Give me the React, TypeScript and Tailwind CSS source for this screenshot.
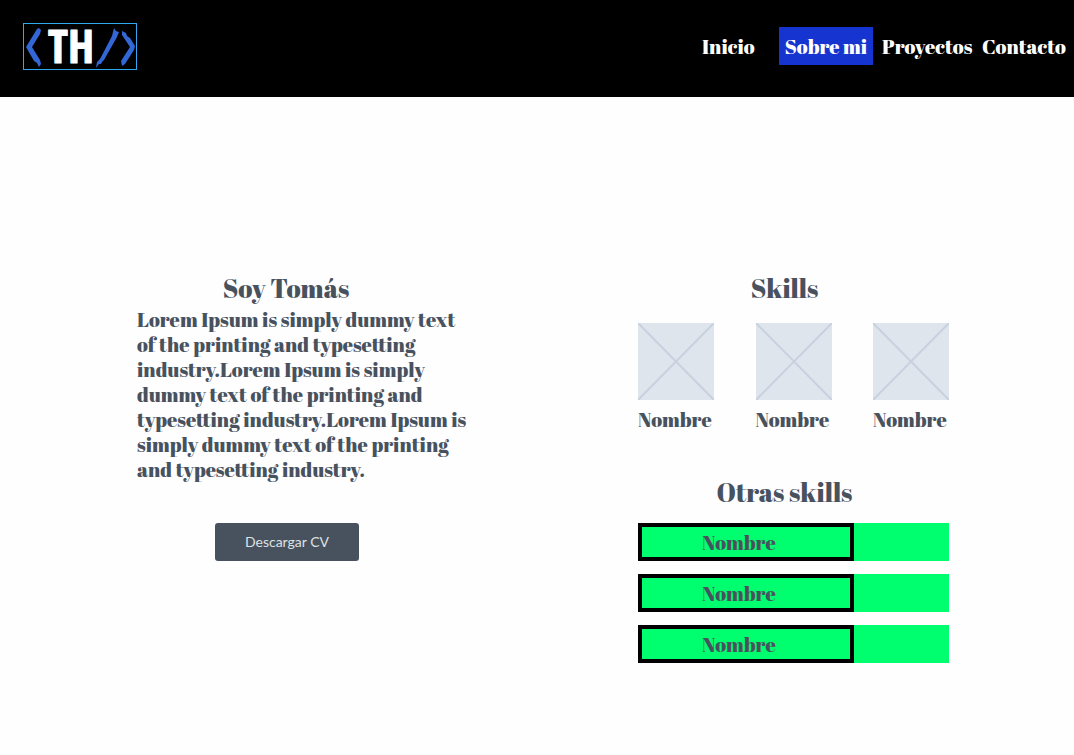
const skills = ['Nombre', 'Nombre', 'Nombre'];

function Logo() {
  return (
    <a href="#inicio" aria-label="TH" className="block h-[47px] w-[114px] shrink-0 border border-[#2fa8f0]">
      <svg viewBox="0 0 112 45" className="block h-full w-full overflow-visible">
        <g fill="#3367d6">
          <path d="M13 5 L15 4 L17 6 L16 10 L8 23 L16 36 L17 40 L15 43 L13 39 L10 37 L2 23 Z" />
          <path d="M90 4 L92 7 L95 8 L93 13 L80 36 L78 38 L77 40 L75 40 L72 44 L73 38 L76 35 L88 12 Z" />
          <path d="M98 7 L102 9 L103 12 L106 14 L111 22 L110 26 L101 40 L98 42 L97 37 L106 23 L98 11 Z" />
        </g>
        <text
          x="47"
          y="39"
          textAnchor="middle"
          fill="#fff"
          stroke="#fff"
          strokeWidth="1"
          strokeLinejoin="round"
          fontSize="46"
          fontWeight="700"
          fontFamily="'Open Sans Condensed', 'Liberation Sans Narrow', 'DejaVu Sans Condensed', sans-serif"
        >
          TH
        </text>
      </svg>
    </a>
  );
}

function Placeholder() {
  return (
    <svg viewBox="0 0 76 77" className="block h-[77px] w-[76px]" aria-hidden="true">
      <rect width="76" height="77" fill="#dfe5ed" />
      <path d="M0 0 L76 77 M76 0 L0 77" stroke="#c8d1df" strokeWidth="2" />
    </svg>
  );
}

function SkillBar({ name }: { name: string }) {
  return (
    <li className="flex h-[38px] bg-[#00ff6e]">
      <span className="flex w-[216px] items-center border-4 border-black pl-[60px]">{name}</span>
    </li>
  );
}

export default function App() {
  return (
    <div className="min-h-screen bg-[#fefefe] font-['Abril_Fatface','Liberation_Serif',serif] text-[20px] leading-[25px] font-normal text-[#48525e]">
      <header className="flex items-start justify-between bg-black pt-[23px] pr-[10px] pb-[27px] pl-[23px] text-white">
        <Logo />
        <nav className="flex h-[46px] items-center whitespace-nowrap">
          <a href="#inicio" className="w-[77px]">Inicio</a>
          <a href="#sobre-mi" aria-current="page" className="flex h-[38px] w-[94px] items-center justify-center bg-[#1634cf]">
            Sobre mi
          </a>
          <a href="#proyectos" className="ml-[9px] w-[100px]">Proyectos</a>
          <a href="#contacto" className="w-[82px]">Contacto</a>
        </nav>
      </header>

      <main className="flex items-start justify-between pt-[173px] pr-[125px] pb-[80px] pl-[137px]">
        <section id="sobre-mi" className="w-[330px]">
          <h1 className="pr-[32px] text-center text-[26px] leading-[37px]">Soy Tomás</h1>
          <p className="whitespace-nowrap">
            Lorem Ipsum is simply dummy text<br />
            of the printing and typesetting<br />
            industry.Lorem Ipsum is simply<br />
            dummy text of the printing and<br />
            typesetting industry.Lorem Ipsum is<br />
            simply dummy text of the printing<br />
            and typesetting industry.
          </p>
          <button
            type="button"
            className="mt-[41px] ml-[78px] h-[38px] w-[144px] rounded-[3px] bg-[#48525e] pb-[2px] font-['Lato',sans-serif] text-[14px] text-[#dfe1e4]"
          >
            Descargar CV
          </button>
        </section>

        <section className="w-[311px]">
          <h2 className="pr-[18px] text-center text-[26px] leading-[37px]">Skills</h2>
          <ul className="mt-[16px] flex justify-between">
            {skills.map((name, i) => (
              <li key={i} className="w-[76px]">
                <Placeholder />
                <p className="mt-[7px]">{name}</p>
              </li>
            ))}
          </ul>
          <h2 className="mt-[42px] pr-[18px] text-center text-[26px] leading-[37px]">Otras skills</h2>
          <ul className="mt-[12px] flex flex-col gap-[13px]">
            {skills.map((name, i) => (
              <SkillBar key={i} name={name} />
            ))}
          </ul>
        </section>
      </main>
    </div>
  );
}
